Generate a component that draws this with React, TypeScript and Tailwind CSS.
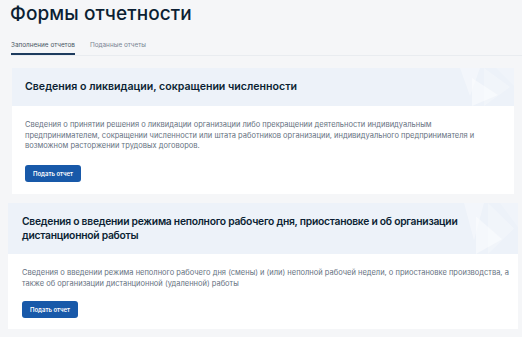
import React from "react";

const font = { fontFamily: "Inter, 'Noto Sans', sans-serif" };

function Deco() {
  return (
    <svg className="absolute right-0 top-0 h-full" width="60" viewBox="0 0 60 38" preserveAspectRatio="none">
      <polygon points="6,0 26,0 16,28" fill="#ffffff" opacity="0.35" />
      <polygon points="18,10 44,27 18,38" fill="#ffffff" opacity="0.45" />
      <polygon points="30,0 56,19 30,38" fill="#ffffff" opacity="0.25" />
      <polygon points="42,0 60,0 60,18" fill="#ffffff" opacity="0.2" />
    </svg>
  );
}

function Button() {
  return (
    <button className="h-[17px] w-[56px] rounded-[3px] bg-[#1859a9] text-[6px] font-semibold text-white">
      Подать отчет
    </button>
  );
}

export default function App() {
  return (
    <div className="h-[337px] w-[522px] overflow-hidden bg-[#f5f6f8] text-[#0b1f33]" style={font}>
      <div className="pl-[10px] pt-[2px]">
        <h1 className="text-[19px] font-medium leading-[24px] tracking-[0.1px]">Формы отчетности</h1>
      </div>
      <div className="mt-[15px] ml-[11px] flex border-b border-[#e9ecf0] text-[6.4px] leading-[8px]">
        <div className="border-b-2 border-[#1d3b5e] pb-[4px] text-[#4a5666]">Заполнение отчетов</div>
        <div className="ml-[15px] pb-[4px] text-[#7a8594]">Поданные отчеты</div>
      </div>

      <div className="ml-[12px] mr-[8px] mt-[12px] bg-white">
        <div className="relative flex h-[38px] items-center bg-[#edf2f9] px-[13px]">
          <div className="text-[10.6px] font-semibold">Сведения о ликвидации, сокращении численности</div>
          <Deco />
        </div>
        <div className="px-[13px] pb-[12px] pt-[14px]">
          <p className="w-[462px] text-[7.5px] leading-[10.5px] text-[#66727f]">
            Сведения о принятии решения о ликвидации организации либо прекращении деятельности индивидуальным
            предпринимателем, сокращении численности или штата работников организации, индивидуального предпринимателя и
            возможном расторжении трудовых договоров.
          </p>
          <div className="mt-[13px] flex">
            <Button />
          </div>
        </div>
      </div>

      <div className="ml-[8px] mr-[4px] mt-[9px] bg-white">
        <div className="relative flex h-[51px] items-center bg-[#edf2f9] px-[14px]">
          <div className="w-[485px] text-[10.3px] font-semibold leading-[14px] tracking-[-0.25px]">
            Сведения о введении режима неполного рабочего дня, приостановке и об организации дистанционной работы
          </div>
          <Deco />
        </div>
        <div className="px-[14px] pb-[11px] pt-[13px]">
          <p className="w-[496px] text-[7.5px] leading-[11px] text-[#66727f]">
            Сведения о введении режима неполного рабочего дня (смены) и (или) неполной рабочей недели, о приостановке производства, а
            также об организации дистанционной (удаленной) работы
          </p>
          <div className="mt-[12px] flex">
            <Button />
          </div>
        </div>
      </div>
    </div>
  );
}
